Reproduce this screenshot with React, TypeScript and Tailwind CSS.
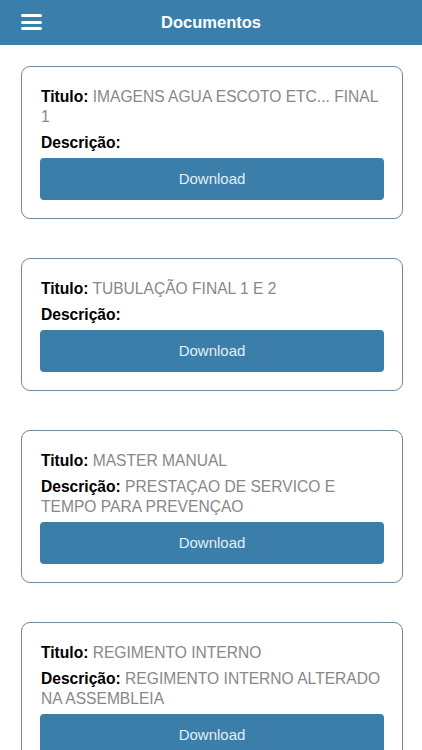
import React from "react";

type Doc = { titulo: string; descricao?: string };

const docs: Doc[] = [
  { titulo: "IMAGENS AGUA ESCOTO ETC... FINAL 1" },
  { titulo: "TUBULAÇÃO FINAL 1 E 2" },
  { titulo: "MASTER MANUAL", descricao: "PRESTAÇAO DE SERVICO E TEMPO PARA PREVENÇAO" },
  { titulo: "REGIMENTO INTERNO", descricao: "REGIMENTO INTERNO ALTERADO NA ASSEMBLEIA" },
];

function Card({ d }: { d: Doc }) {
  return (
    <div className="rounded-[9px] border border-[#6f8797] bg-white px-[18px] pt-[20px] pb-[18px]">
      <p className="pl-[1px] text-[15.6px] leading-[20px] text-black">
        <span className="font-bold">Titulo:</span>{" "}
        <span className="text-[#888888]">{d.titulo}</span>
      </p>
      <p className="mt-[6px] pl-[1px] text-[15.6px] leading-[20px] text-black">
        <span className="font-bold">Descrição:</span>
        {d.descricao ? (
          <>
            {" "}
            <span className="text-[#888888]">{d.descricao}</span>
          </>
        ) : null}
      </p>
      <button className="mt-[5px] flex h-[42px] w-full items-center justify-center rounded-[4px] bg-[#3a7ea9] text-[15px] text-[#e3eef6]">
        Download
      </button>
    </div>
  );
}

export default function App() {
  return (
    <div
      className="min-h-[750px] w-[422px] bg-white"
      style={{ fontFamily: '"Liberation Sans", Arial, sans-serif' }}
    >
      <header className="relative flex h-[45px] items-center justify-center bg-[#3a7eab]">
        <div className="absolute left-[21px] top-[14px] flex w-[21px] flex-col gap-[3.5px]">
          <span className="h-[3px] w-full rounded-sm bg-white" />
          <span className="h-[3px] w-full rounded-sm bg-white" />
          <span className="h-[3px] w-full rounded-sm bg-white" />
        </div>
        <h1 className="text-[16.5px] font-bold text-white">Documentos</h1>
      </header>
      <main className="flex flex-col gap-[39px] pl-[21px] pr-[19px] pt-[21px] pb-6">
        {docs.map((d, i) => (
          <Card key={i} d={d} />
        ))}
      </main>
    </div>
  );
}
